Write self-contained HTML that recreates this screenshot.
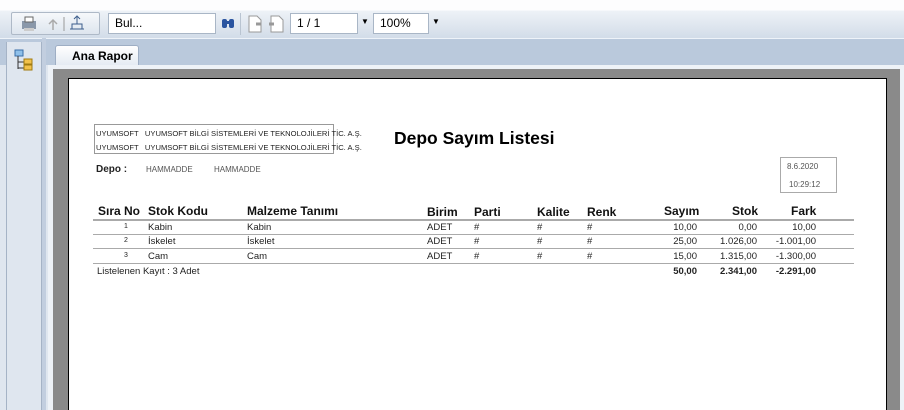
<!DOCTYPE html>
<html><head><meta charset="utf-8"><style>
*{margin:0;padding:0;box-sizing:border-box}
html,body{width:904px;height:410px;overflow:hidden}
body{background:#dfe6ef;font-family:"Liberation Sans",sans-serif;position:relative}
.a{position:absolute}
.tb{left:0;top:0;width:904px;height:38px;background:linear-gradient(#fdfdfe 0,#fdfdfe 10px,#eef2f7 11px,#d3dde9 37px)}
.box{background:#fff;border:1px solid #a9b6c6;font-size:12px;padding:2px 6px}
.r{position:absolute;font-size:9.5px;color:#222}
.h{position:absolute;font-size:12px;font-weight:bold;color:#111}
.num{text-align:right}
</style></head><body>
<div class="a tb"></div>
<div class="a" style="left:0;top:38px;width:904px;height:27px;background:#bac9dc;border-top:1px solid #eef3f9"></div>
<div class="a" style="left:11px;top:12px;width:89px;height:23px;border:1px solid #aeb9c7;border-radius:2px;background:linear-gradient(#f6f8fb,#dde5ee)"></div>
<svg class="a" style="left:20px;top:14px" width="80" height="20"><rect x="2" y="7" width="14" height="8" fill="#8a98aa"/><rect x="5" y="3" width="8" height="5" fill="#fff" stroke="#666"/><rect x="4" y="14" width="10" height="3" fill="#ccc"/><path d="M33 16V6M29 10l4-4 4 4" stroke="#aaa" fill="none" stroke-width="1.5"/><line x1="44" y1="3" x2="44" y2="17" stroke="#999"/><path d="M50 15h14M52 15v-5h10v5M57 10V3M54 5l3-3 3 3" stroke="#3c5d8c" fill="none"/></svg>
<div class="a box" style="left:108px;top:13px;width:108px;height:21px">Bul...</div>
<svg class="a" style="left:221px;top:16px" width="14" height="14"><rect x="1" y="3" width="5" height="9" rx="2" fill="#2a54a0"/><rect x="8" y="3" width="5" height="9" rx="2" fill="#2a54a0"/><rect x="5" y="5" width="4" height="3" fill="#2a54a0"/></svg>
<div class="a" style="left:240px;top:13px;width:1px;height:22px;background:#b9c4d1"></div>
<svg class="a" style="left:247px;top:15px" width="40" height="18"><path d="M2 1h8l4 4v12H2z" fill="#fff" stroke="#999"/><path d="M9 9h5" stroke="#999" stroke-width="3"/><path d="M24 1h8l4 4v12H24z" fill="#fff" stroke="#999"/><path d="M22 9h5" stroke="#999" stroke-width="3"/></svg>
<div class="a box" style="left:290px;top:13px;width:68px;height:21px">1 / 1</div>
<div class="a" style="left:361px;top:17px;font-size:8px">▼</div>
<div class="a box" style="left:373px;top:13px;width:56px;height:21px">100%</div>
<div class="a" style="left:432px;top:17px;font-size:8px">▼</div>
<div class="a" style="left:6px;top:42px;width:36px;height:368px;background:#dfe6ef;border-left:1px solid #a5b3c6;border-right:1px solid #a5b3c6"></div>
<svg class="a" style="left:14px;top:49px" width="22" height="22"><rect x="1" y="1" width="8" height="6" fill="#8fc0ea" stroke="#3a6ea8"/><path d="M4 7v13M4 13h6M4 19h6" stroke="#333" fill="none"/><rect x="10" y="10" width="8" height="5" fill="#f2c24c" stroke="#a07a10"/><rect x="10" y="16" width="8" height="5" fill="#f2c24c" stroke="#a07a10"/></svg>
<div class="a" style="left:42px;top:38px;width:4px;height:372px;background:#c2cedf"></div>
<div class="a" style="left:55px;top:45px;width:84px;height:21px;background:linear-gradient(#fff,#e4eaf2);border:1px solid #9eaec4;border-bottom:none;border-radius:3px 3px 0 0;font-size:12px;font-weight:bold;padding:3px 0 0 16px">Ana Rapor</div>
<div class="a" style="left:48px;top:65px;width:856px;height:345px;background:#eef2f7"></div>
<div class="a" style="left:53px;top:69px;width:847px;height:341px;background:#8a8a8a"></div>
<div class="a" style="left:68px;top:78px;width:819px;height:340px;background:#fff;border:1px solid #000;border-bottom:none"></div>
<div class="a" style="left:94px;top:124px;width:240px;height:30px;border:1px solid #999"></div>
<div class="r" style="left:96px;top:129px;font-size:7.6px;white-space:nowrap">UYUMSOFT&nbsp;&nbsp;&nbsp;UYUMSOFT BİLGİ SİSTEMLERİ VE TEKNOLOJİLERİ TİC. A.Ş.</div>
<div class="r" style="left:96px;top:143px;font-size:7.6px;white-space:nowrap">UYUMSOFT&nbsp;&nbsp;&nbsp;UYUMSOFT BİLGİ SİSTEMLERİ VE TEKNOLOJİLERİ TİC. A.Ş.</div>
<div class="a" style="left:394px;top:128px;font-size:17.5px;font-weight:bold;white-space:nowrap">Depo Sayım Listesi</div>
<div class="r" style="left:96px;top:164px;font-weight:bold;font-size:10px">Depo :</div>
<div class="r" style="left:146px;top:165px;font-size:8px;color:#555">HAMMADDE</div>
<div class="r" style="left:214px;top:165px;font-size:8px;color:#555">HAMMADDE</div>
<div class="a" style="left:780px;top:157px;width:57px;height:36px;border:1px solid #aaa"></div>
<div class="r" style="left:787px;top:162px;font-size:8px;color:#555">8.6.2020</div>
<div class="r" style="left:789px;top:180px;font-size:8px;color:#555">10:29:12</div>
<div class="h" style="left:98px;top:204px">Sıra No</div>
<div class="h" style="left:148px;top:204px">Stok Kodu</div>
<div class="h" style="left:247px;top:204px">Malzeme Tanımı</div>
<div class="h" style="left:427px;top:205px">Birim</div>
<div class="h" style="left:474px;top:205px">Parti</div>
<div class="h" style="left:537px;top:205px">Kalite</div>
<div class="h" style="left:587px;top:205px">Renk</div>
<div class="h" style="left:664px;top:204px">Sayım</div>
<div class="h" style="left:732px;top:204px">Stok</div>
<div class="h" style="left:791px;top:204px">Fark</div>
<div class="a" style="left:93px;top:219px;width:761px;height:2px;background:#aaa"></div>
<div class="a" style="left:93px;top:234px;width:761px;height:1px;background:#aaa"></div>
<div class="a" style="left:93px;top:248px;width:761px;height:1px;background:#aaa"></div>
<div class="a" style="left:93px;top:263px;width:761px;height:1px;background:#aaa"></div>
<div class="r" style="left:124px;top:223px;font-size:7px">1</div>
<div class="r" style="left:124px;top:237px;font-size:7px">2</div>
<div class="r" style="left:124px;top:252px;font-size:7px">3</div>
<div class="r" style="left:148px;top:222px">Kabin</div><div class="r" style="left:247px;top:222px">Kabin</div>
<div class="r" style="left:148px;top:236px">İskelet</div><div class="r" style="left:247px;top:236px">İskelet</div>
<div class="r" style="left:148px;top:251px">Cam</div><div class="r" style="left:247px;top:251px">Cam</div>
<div class="r" style="left:427px;top:222px">ADET</div><div class="r" style="left:427px;top:236px">ADET</div><div class="r" style="left:427px;top:251px">ADET</div>
<div class="r" style="left:474px;top:222px">#</div><div class="r" style="left:474px;top:236px">#</div><div class="r" style="left:474px;top:251px">#</div>
<div class="r" style="left:537px;top:222px">#</div><div class="r" style="left:537px;top:236px">#</div><div class="r" style="left:537px;top:251px">#</div>
<div class="r" style="left:587px;top:222px">#</div><div class="r" style="left:587px;top:236px">#</div><div class="r" style="left:587px;top:251px">#</div>
<div class="r num" style="left:617px;width:80px;top:222px">10,00</div><div class="r num" style="left:677px;width:80px;top:222px">0,00</div><div class="r num" style="left:736px;width:80px;top:222px">10,00</div>
<div class="r num" style="left:617px;width:80px;top:236px">25,00</div><div class="r num" style="left:677px;width:80px;top:236px">1.026,00</div><div class="r num" style="left:736px;width:80px;top:236px">-1.001,00</div>
<div class="r num" style="left:617px;width:80px;top:251px">15,00</div><div class="r num" style="left:677px;width:80px;top:251px">1.315,00</div><div class="r num" style="left:736px;width:80px;top:251px">-1.300,00</div>
<div class="r" style="left:97px;top:266px">Listelenen Kayıt : 3 Adet</div>
<div class="r num" style="left:617px;width:80px;top:266px;font-weight:bold">50,00</div><div class="r num" style="left:677px;width:80px;top:266px;font-weight:bold">2.341,00</div><div class="r num" style="left:736px;width:80px;top:266px;font-weight:bold">-2.291,00</div>
</body></html>
